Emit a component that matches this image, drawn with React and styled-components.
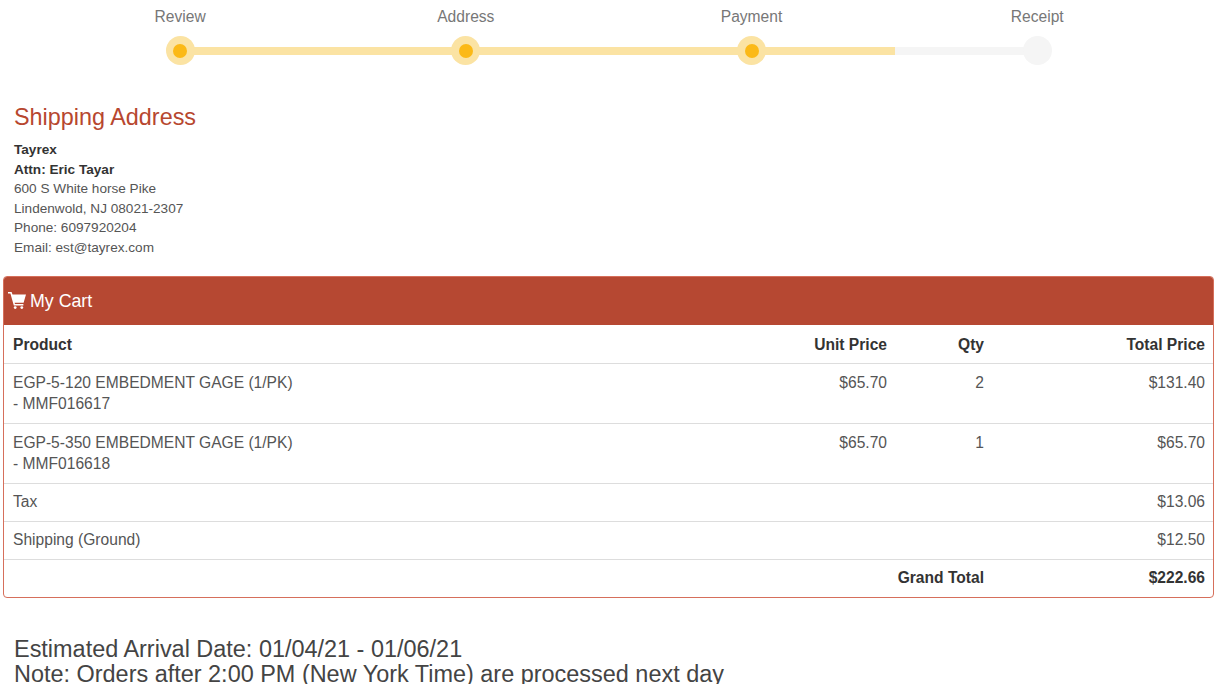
import styled, { createGlobalStyle } from 'styled-components'

const GlobalStyle = createGlobalStyle`
  html, body {
    margin: 0;
    padding: 0;
    height: 684px;
    overflow: hidden;
    background: #fff;
    font-family: 'Liberation Sans', Arial, sans-serif;
    color: #444;
  }
  * {
    box-sizing: border-box;
  }
`
const Page = styled.div`
  padding: 0 7px 0 3px;
`
const Wizard = styled.div`
  display: flex;
  margin: 0 33.95px 0 34.25px;
  height: 65px;
`
const Step = styled.div`
  position: relative;
  flex: 1;
  display: flex;
  flex-direction: column;
  align-items: center;
`
const StepLabel = styled.div`
  font-size: 15.6px;
  line-height: 20px;
  margin-top: 7px;
  color: #777;
`
const Track = styled.div`
  position: absolute;
  top: 47px;
  left: 50%;
  width: 100%;
  height: 8px;
  background: #f5f5f5;
`
const TrackFill = styled.div`
  height: 100%;
  background: #fbe3a3;
`
const Circle = styled.div`
  position: relative;
  margin-top: 9px;
  width: 29px;
  height: 29px;
  border-radius: 50%;
  background: ${(p) => (p.$active ? '#fbe3a3' : '#f5f5f5')};
  display: flex;
  align-items: center;
  justify-content: center;
`
const Dot = styled.div`
  width: 14px;
  height: 14px;
  border-radius: 50%;
  background: #fbb917;
`
const Address = styled.div`
  padding-left: 11px;
`
const AddressTitle = styled.h3`
  margin: 39px 0 0;
  font-size: 23.4px;
  font-weight: 400;
  line-height: 26px;
  color: #b7472f;
`
const AddressLines = styled.div`
  margin-top: 10px;
  font-size: 13.6px;
  line-height: 19.6px;
  color: #555;
  b {
    color: #333;
  }
`
const Panel = styled.div`
  margin-top: 18px;
  border: 1px solid #d66f5b;
  border-radius: 4px;
  overflow: hidden;
`
const PanelHeading = styled.div`
  display: flex;
  align-items: center;
  gap: 4px;
  height: 48px;
  padding: 2px 0 0 4px;
  background: #b64832;
  color: #fff;
  font-size: 17.8px;
`
const CartIcon = styled.svg`
  width: 18px;
  height: 17px;
  margin-top: -3px;
  fill: #fff;
`
const CartTable = styled.table`
  width: 100%;
  border-collapse: collapse;
  table-layout: fixed;
  font-size: 15.6px;
  line-height: 22px;
  color: #555;
`
const Row = styled.tr`
  border-top: ${(p) => (p.$head ? 'none' : '1px solid #ddd')};
  td {
    padding-top: ${(p) => (p.$head ? 9 : p.$tall ? 8 : 7)}px;
    padding-bottom: ${(p) => (p.$head ? 7 : 8)}px;
  }
`
const Cell = styled.td`
  padding-left: 9px;
  padding-right: 8px;
  vertical-align: top;
  text-align: ${(p) => (p.$right ? 'right' : 'left')};
`
const HeadCell = styled(Cell)`
  font-weight: 700;
  color: #333;
`
const Sku = styled.div`
  margin-top: -1px;
`
const Notes = styled.div`
  margin-top: 39px;
  padding-left: 11px;
  font-size: 23.45px;
  line-height: 25px;
  color: #444;
`

const steps = [
  { label: 'Review', active: true, fill: 100 },
  { label: 'Address', active: true, fill: 100 },
  { label: 'Payment', active: true, fill: 50.2 },
  { label: 'Receipt', active: false },
]

const items = [
  { name: 'EGP-5-120 EMBEDMENT GAGE (1/PK)', sku: '- MMF016617', unit: '$65.70', qty: 2, total: '$131.40' },
  { name: 'EGP-5-350 EMBEDMENT GAGE (1/PK)', sku: '- MMF016618', unit: '$65.70', qty: 1, total: '$65.70' },
]

export default function App() {
  return (
    <Page>
      <GlobalStyle />
      <Wizard>
        {steps.map((s, i) => (
          <Step key={s.label}>
            <StepLabel>{s.label}</StepLabel>
            {i < steps.length - 1 && (
              <Track>
                <TrackFill style={{ width: `${s.fill}%` }} />
              </Track>
            )}
            <Circle $active={s.active}>{s.active && <Dot />}</Circle>
          </Step>
        ))}
      </Wizard>
      <Address>
        <AddressTitle>Shipping Address</AddressTitle>
        <AddressLines>
          <b>Tayrex</b>
          <br />
          <b>Attn: Eric Tayar</b>
          <br />
          600 S White horse Pike
          <br />
          Lindenwold, NJ 08021-2307
          <br />
          Phone: 6097920204
          <br />
          Email: est@tayrex.com
        </AddressLines>
      </Address>
      <Panel>
        <PanelHeading>
          <CartIcon viewBox="0 0 18 17">
            <path d="M0 0h3.6l.9 2.6H18l-2.4 8.2H6.6l.4 1.3h8.4v1.5H5.8L2.4 1.6H0z" />
            <circle cx="7.2" cy="15.6" r="1.4" />
            <circle cx="13.8" cy="15.6" r="1.4" />
          </CartIcon>
          My Cart
        </PanelHeading>
        <CartTable>
          <colgroup>
            <col style={{ width: 'auto' }} />
            <col style={{ width: 170 }} />
            <col style={{ width: 97 }} />
            <col style={{ width: 221 }} />
          </colgroup>
          <tbody>
            <Row $head>
              <HeadCell>Product</HeadCell>
              <HeadCell $right>Unit Price</HeadCell>
              <HeadCell $right>Qty</HeadCell>
              <HeadCell $right>Total Price</HeadCell>
            </Row>
            {items.map((it) => (
              <Row key={it.sku} $tall>
                <Cell>
                  {it.name}
                  <Sku>{it.sku}</Sku>
                </Cell>
                <Cell $right>{it.unit}</Cell>
                <Cell $right>{it.qty}</Cell>
                <Cell $right>{it.total}</Cell>
              </Row>
            ))}
            <Row>
              <Cell>Tax</Cell>
              <Cell colSpan={2} />
              <Cell $right>$13.06</Cell>
            </Row>
            <Row>
              <Cell>Shipping (Ground)</Cell>
              <Cell colSpan={2} />
              <Cell $right>$12.50</Cell>
            </Row>
            <Row>
              <Cell />
              <HeadCell $right colSpan={2}>Grand Total</HeadCell>
              <HeadCell $right>$222.66</HeadCell>
            </Row>
          </tbody>
        </CartTable>
      </Panel>
      <Notes>
        Estimated Arrival Date: 01/04/21 - 01/06/21
        <br />
        Note: Orders after 2:00 PM (New York Time) are processed next day
      </Notes>
    </Page>
  )
}
